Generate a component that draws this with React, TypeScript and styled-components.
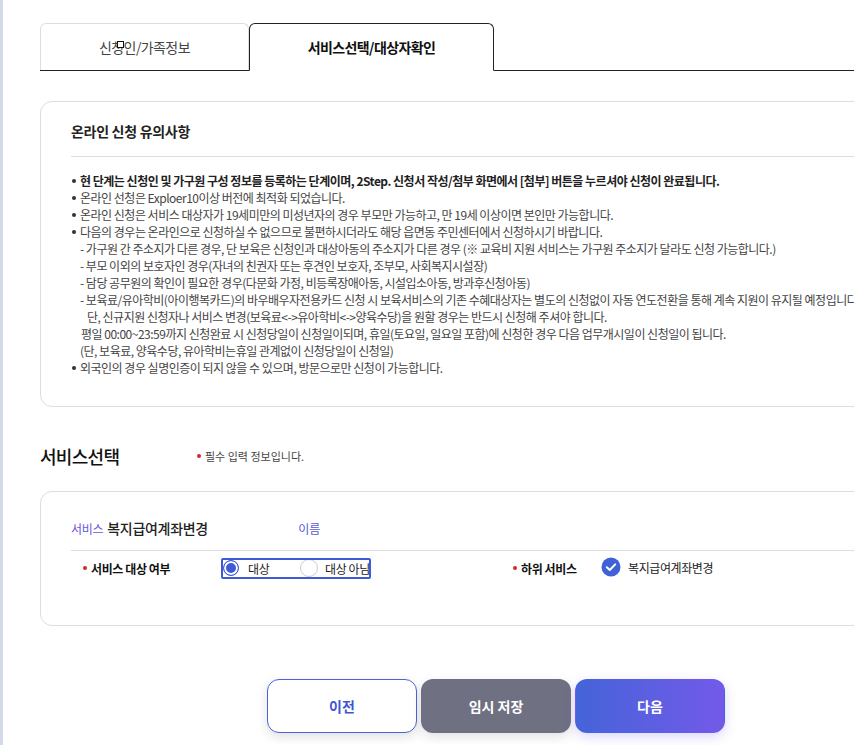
import React from "react";
import styled, { createGlobalStyle } from "styled-components";

const Global = createGlobalStyle`
  html, body { margin: 0; padding: 0; background: #fff; overflow: hidden; }
  body { font-family: "Noto Sans CJK KR", "Noto Sans", sans-serif; color: #333; }
  * { box-sizing: border-box; }
`;

const Page = styled.div`
  display: flex;
  width: 960px;
  min-height: 745px;
`;

const Strip = styled.div`
  width: 3px;
  flex: none;
  background: #d3dbea;
`;

const Main = styled.main`
  flex: 1;
  padding: 23px 0 0 37px;
  display: flex;
  flex-direction: column;
`;

const TabBar = styled.div`
  display: flex;
  height: 48px;
  border-bottom: 1px solid #222;
`;

const Tab = styled.div<{ $active?: boolean }>`
  position: relative;
  width: ${(p) => (p.$active ? 245 : 209)}px;
  display: flex;
  align-items: center;
  justify-content: center;
  font-size: 14px;
  letter-spacing: -0.6px;
  border: 1px solid ${(p) => (p.$active ? "#222" : "#ddd")};
  border-bottom: ${(p) => (p.$active ? "1px solid #fff" : "none")};
  margin-bottom: ${(p) => (p.$active ? "-1px" : "0")};
  border-radius: 6px 6px 0 0;
  background: #fff;
  color: ${(p) => (p.$active ? "#111" : "#444")};
  font-weight: ${(p) => (p.$active ? 700 : 400)};
`;

const TabLabel = styled.span`
  position: relative;
`;

const Tofu = styled.span`
  position: absolute;
  left: 18px;
  top: 4px;
  width: 7px;
  height: 7px;
  border: 1px solid #111;
  background: #fff;
`;

const Panel = styled.section`
  margin-top: 30px;
  border: 1px solid #ddd;
  border-radius: 12px;
  padding: 19px 30px 30px 30px;
`;

const PanelTitle = styled.h3`
  margin: 0;
  font-size: 14px;
  line-height: 20px;
  font-weight: 700;
  color: #222;
  letter-spacing: -0.3px;
`;

const Divider = styled.hr`
  margin: 15px 0 15px;
  border: none;
  border-top: 1px solid #ddd;
`;

const NoticeList = styled.ul`
  margin: 0;
  padding: 0;
  list-style: none;
  font-size: 12px;
  line-height: 17px;
  color: #444;
  letter-spacing: -0.5px;
  white-space: nowrap;
`;

const Item = styled.li<{ $bold?: boolean }>`
  position: relative;
  padding-left: 9px;
  font-weight: ${(p) => (p.$bold ? 700 : 400)};
  color: ${(p) => (p.$bold ? "#222" : "#444")};
  &::before {
    content: "";
    position: absolute;
    left: 1px;
    top: 7px;
    width: 4px;
    height: 4px;
    border-radius: 50%;
    background: #333;
  }
`;

const SubLine = styled.div<{ $indent?: number }>`
  padding-left: ${(p) => p.$indent ?? 0}px;
`;

const SectionHead = styled.div`
  margin-top: 37px;
  display: flex;
  align-items: center;
  height: 24px;
`;

const SectionTitle = styled.h2`
  margin: 0;
  width: 157px;
  font-size: 18px;
  font-weight: 500;
  color: #111;
  letter-spacing: -0.7px;
`;

const RequiredNote = styled.span`
  font-size: 11px;
  color: #444;
  display: flex;
  align-items: center;
  gap: 4px;
`;

const RedDot = styled.i`
  display: inline-block;
  width: 4px;
  height: 4px;
  border-radius: 50%;
  background: #d8262e;
`;

const Card = styled.section`
  margin-top: 23px;
  border: 1px solid #ddd;
  border-radius: 12px;
  padding: 25px 30px 0 30px;
  height: 135px;
`;

const CardHead = styled.div`
  display: flex;
  align-items: center;
  height: 22px;
`;

const SvcTag = styled.span`
  font-size: 12px;
  color: #6b55dc;
  margin-right: 4px;
  letter-spacing: -0.3px;
`;

const SvcName = styled.span`
  font-size: 14px;
  font-weight: 500;
  color: #222;
  width: 191px;
  letter-spacing: -0.3px;
`;

const NameLabel = styled.span`
  font-size: 12px;
  color: #5858d6;
`;

const CardDivider = styled.hr`
  margin: 11px 0 6px;
  border: none;
  border-top: 1px solid #ddd;
`;

const FieldRow = styled.div`
  display: flex;
  align-items: center;
  height: 22px;
`;

const FieldLabel = styled.span<{ $w: number; $pad: number }>`
  width: ${(p) => p.$w}px;
  padding-left: ${(p) => p.$pad}px;
  display: flex;
  align-items: center;
  gap: 4px;
  font-size: 12px;
  font-weight: 700;
  color: #111;
  letter-spacing: -0.4px;
`;

const RadioGroup = styled.div`
  width: 150px;
  height: 21px;
  border: 2px solid #3f5ad6;
  border-radius: 2px;
  display: flex;
  align-items: center;
  overflow: hidden;
  white-space: nowrap;
`;

const RadioOption = styled.label<{ $w: number }>`
  width: ${(p) => p.$w}px;
  flex: none;
  display: flex;
  align-items: center;
  gap: 8px;
  font-size: 12px;
  color: #222;
  letter-spacing: -0.4px;
`;

const RadioMark = styled.span<{ $on?: boolean }>`
  width: ${(p) => (p.$on ? 16 : 18)}px;
  height: ${(p) => (p.$on ? 16 : 18)}px;
  margin-right: ${(p) => (p.$on ? 1 : -1)}px;
  border-radius: 50%;
  border: 1px solid ${(p) => (p.$on ? "#3f5ad6" : "#ccc")};
  background: ${(p) => (p.$on ? "#3f5ad6" : "#fff")};
  box-shadow: ${(p) => (p.$on ? "inset 0 0 0 2px #fff" : "none")};
  flex: none;
`;

const Spacer = styled.div`
  width: 142px;
`;

const CheckLabel = styled.span`
  display: flex;
  align-items: center;
  gap: 7px;
  font-size: 12px;
  color: #222;
  margin-top: -2px;
  letter-spacing: -0.4px;
`;

const Buttons = styled.div`
  margin-top: 53px;
  display: flex;
  gap: 4px;
  padding-left: 227px;
`;

const Btn = styled.button<{ $kind: "outline" | "gray" | "primary" }>`
  width: 150px;
  height: 54px;
  border-radius: 12px;
  font-family: inherit;
  font-size: 14px;
  font-weight: 700;
  cursor: pointer;
  border: 1px solid ${(p) => (p.$kind === "outline" ? "#4a63d8" : "transparent")};
  color: ${(p) => (p.$kind === "outline" ? "#3f55cf" : "#fff")};
  background: ${(p) =>
    p.$kind === "outline"
      ? "#fff"
      : p.$kind === "gray"
      ? "#6f7082"
      : "linear-gradient(90deg, #4564d9 0%, #735ae9 100%)"};
  box-shadow: ${(p) =>
    p.$kind === "primary"
      ? "0 4px 12px rgba(110, 100, 230, 0.25)"
      : "0 4px 12px rgba(0, 0, 0, 0.12)"};
`;

const CheckIcon = () => (
  <svg width="20" height="20" viewBox="0 0 20 20">
    <circle cx="10" cy="10" r="9.5" fill="#4060d8" />
    <path d="M5.8 10.2 L8.8 13 L14.2 7.4" fill="none" stroke="#fff" strokeWidth="2" strokeLinecap="round" strokeLinejoin="round" />
  </svg>
);

export default function App() {
  return (
    <>
      <Global />
      <Page>
        <Strip />
        <Main>
          <TabBar>
            <Tab>
              <TabLabel>
                신청인/가족정보
                <Tofu />
              </TabLabel>
            </Tab>
            <Tab $active>서비스선택/대상자확인</Tab>
          </TabBar>

          <Panel>
            <PanelTitle>온라인 신청 유의사항</PanelTitle>
            <Divider />
            <NoticeList>
              <Item $bold>
                현 단계는 신청인 및 가구원 구성 정보를 등록하는 단계이며, 2Step. 신청서 작성/첨부 화면에서 [첨부] 버튼을 누르셔야 신청이 완료됩니다.
              </Item>
              <Item>온라인 선청은 Exploer10이상 버전에 최적화 되었습니다.</Item>
              <Item>
                온라인 신청은 서비스 대상자가 19세미만의 미성년자의 경우 부모만 가능하고, 만 19세 이상이면 본인만 가능합니다.
              </Item>
              <Item>
                다음의 경우는 온라인으로 신청하실 수 없으므로 불편하시더라도 해당 읍면동 주민센터에서 신청하시기 바랍니다.
                <SubLine>- 가구원 간 주소지가 다른 경우, 단 보육은 신청인과 대상아동의 주소지가 다른 경우 (※ 교육비 지원 서비스는 가구원 주소지가 달라도 신청 가능합니다.)</SubLine>
                <SubLine>- 부모 이외의 보호자인 경우(자녀의 친권자 또는 후견인 보호자, 조부모, 사회복지시설장)</SubLine>
                <SubLine>- 담당 공무원의 확인이 필요한 경우(다문화 가정, 비등록장애아동, 시설입소아동, 방과후신청아동)</SubLine>
                <SubLine>- 보육료/유아학비(아이행복카드)의 바우배우자전용카드 신청 시 보육서비스의 기존 수혜대상자는 별도의 신청없이 자동 연도전환을 통해 계속 지원이 유지될 예정입니다.</SubLine>
                <SubLine $indent={7}>단, 신규지원 신청자나 서비스 변경(보육료&lt;-&gt;유아학비&lt;-&gt;양육수당)을 원할 경우는 반드시 신청해 주셔야 합니다.</SubLine>
                <SubLine $indent={1}>평일 00:00~23:59까지 신청완료 시 신청당일이 신청일이되며, 휴일(토요일, 일요일 포함)에 신청한 경우 다음 업무개시일이 신청일이 됩니다.</SubLine>
                <SubLine>(단, 보육료, 양육수당, 유아학비는휴일 관계없이 신청당일이 신청일)</SubLine>
              </Item>
              <Item>외국인의 경우 실명인증이 되지 않을 수 있으며, 방문으로만 신청이 가능합니다.</Item>
            </NoticeList>
          </Panel>

          <SectionHead>
            <SectionTitle>서비스선택</SectionTitle>
            <RequiredNote>
              <RedDot />
              필수 입력 정보입니다.
            </RequiredNote>
          </SectionHead>

          <Card>
            <CardHead>
              <SvcTag>서비스</SvcTag>
              <SvcName>복지급여계좌변경</SvcName>
              <NameLabel>이름</NameLabel>
            </CardHead>
            <CardDivider />
            <FieldRow>
              <FieldLabel $w={150} $pad={12}>
                <RedDot />
                서비스 대상 여부
              </FieldLabel>
              <RadioGroup>
                <RadioOption $w={77}>
                  <RadioMark $on />
                  대상
                </RadioOption>
                <RadioOption $w={80}>
                  <RadioMark />
                  대상 아님
                </RadioOption>
              </RadioGroup>
              <Spacer />
              <FieldLabel $w={88} $pad={0}>
                <RedDot />
                하위 서비스
              </FieldLabel>
              <CheckLabel>
                <CheckIcon />
                복지급여계좌변경
              </CheckLabel>
            </FieldRow>
          </Card>

          <Buttons>
            <Btn $kind="outline">이전</Btn>
            <Btn $kind="gray">임시 저장</Btn>
            <Btn $kind="primary">다음</Btn>
          </Buttons>
        </Main>
      </Page>
    </>
  );
}
